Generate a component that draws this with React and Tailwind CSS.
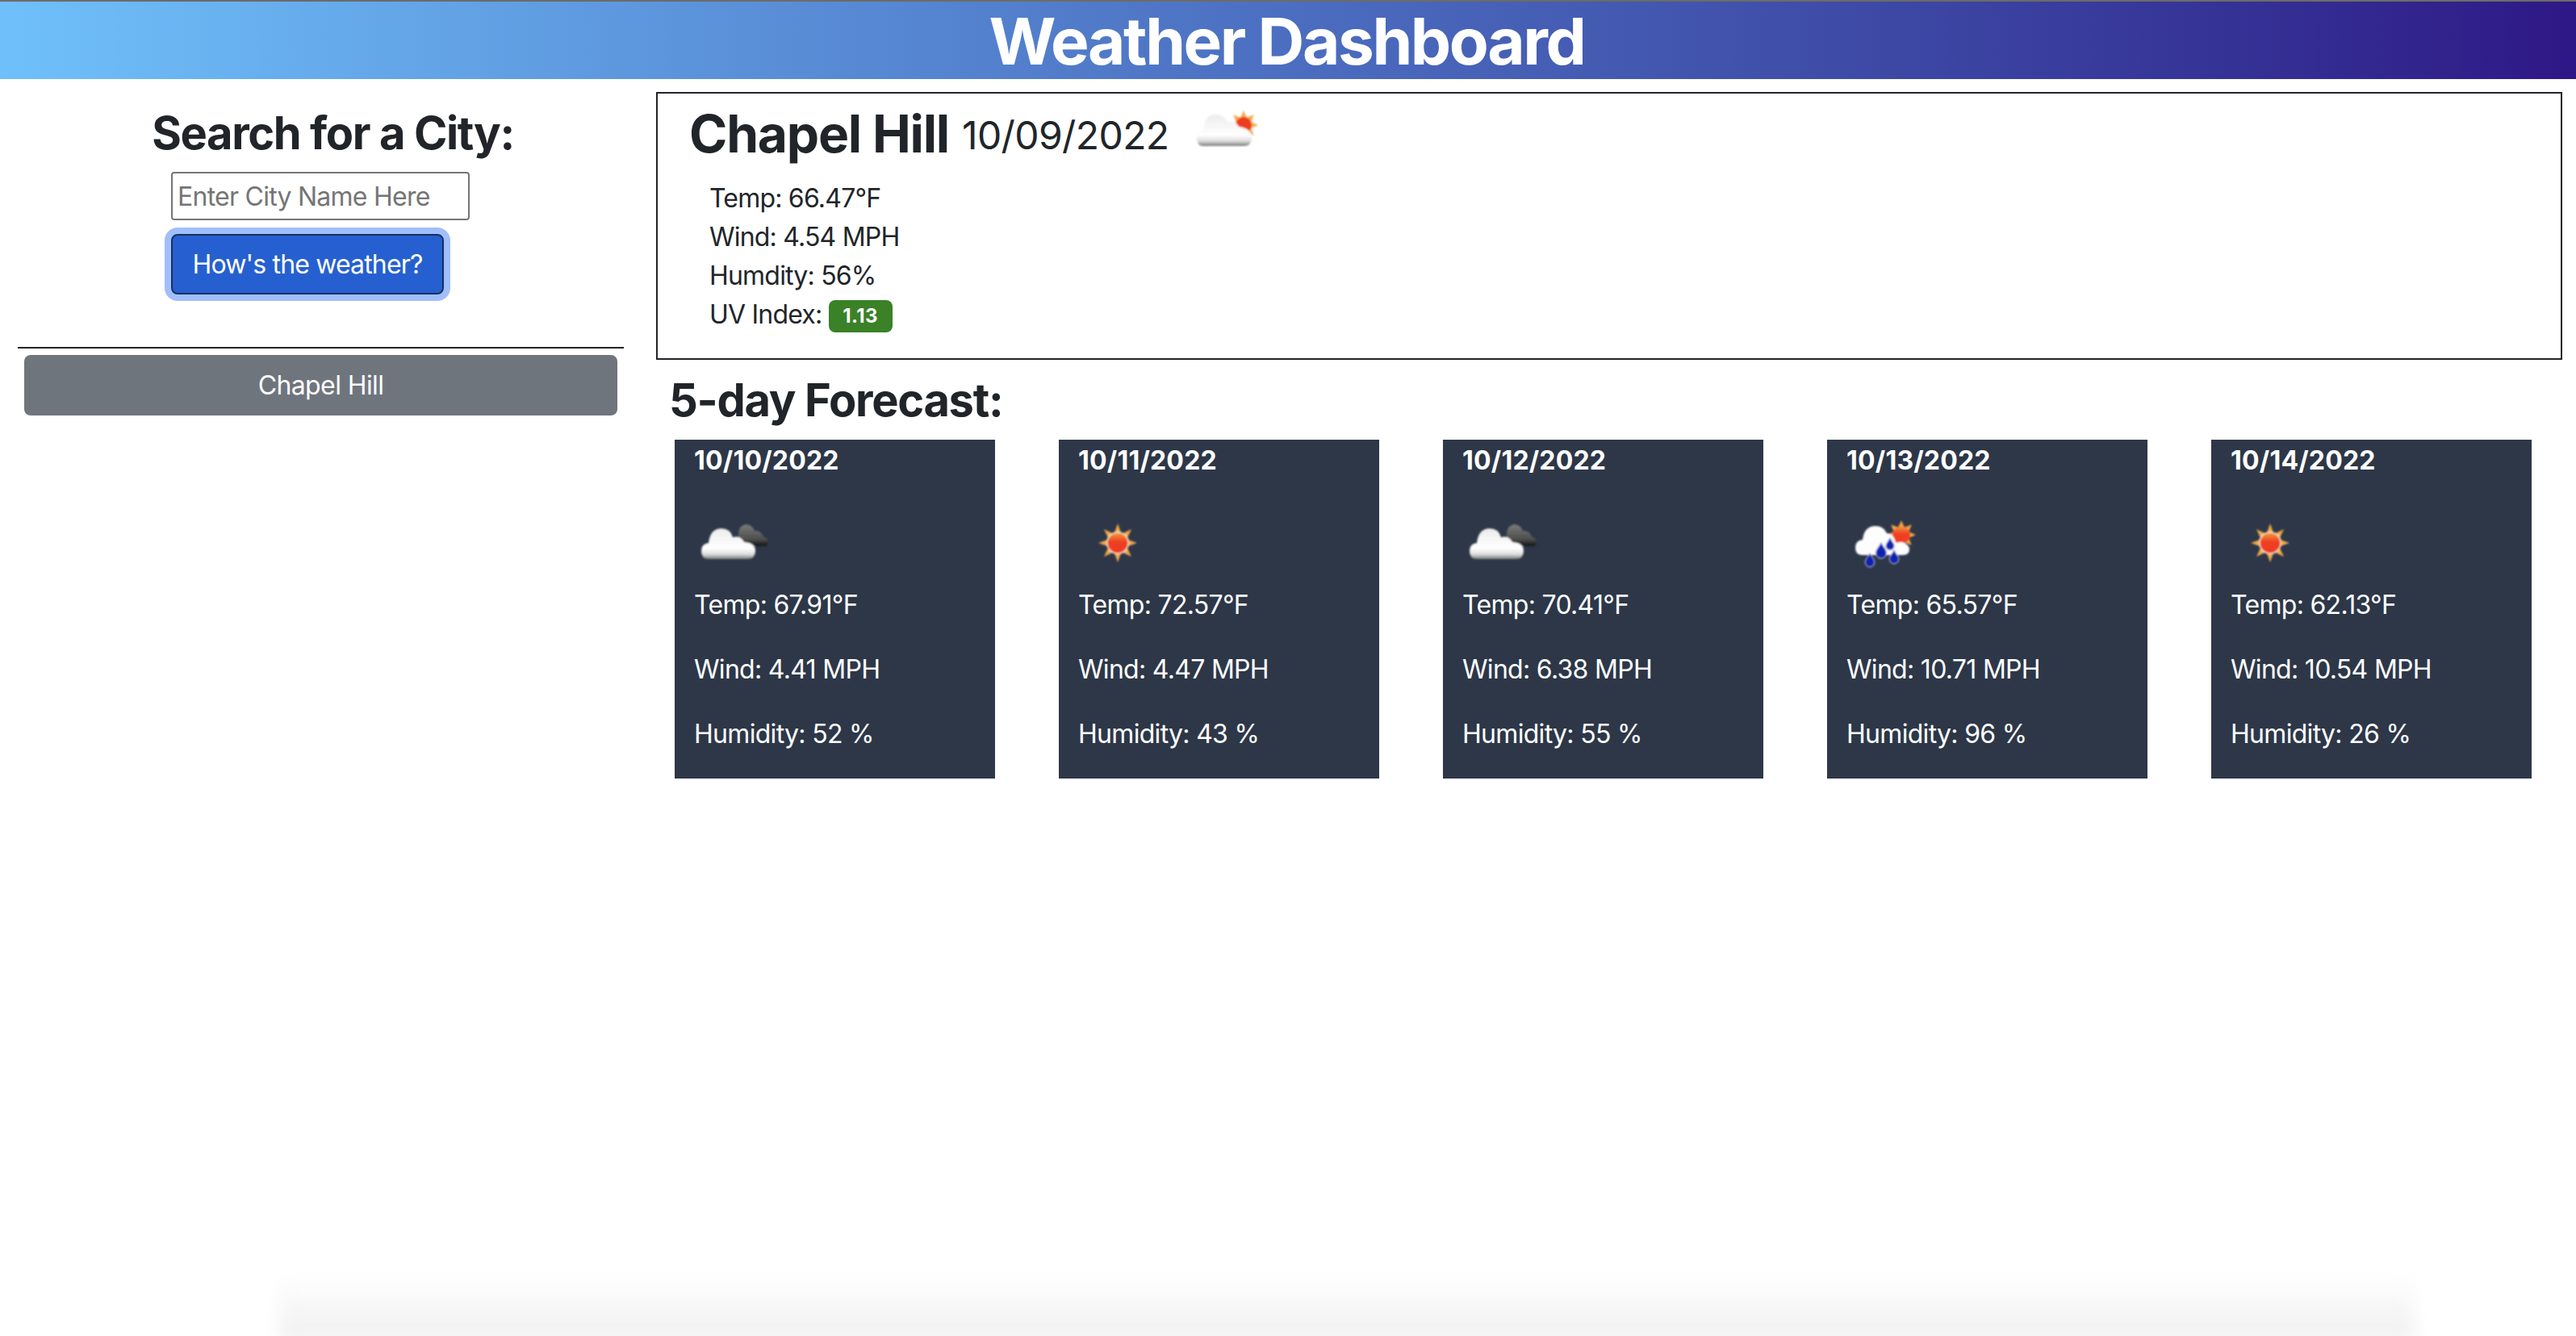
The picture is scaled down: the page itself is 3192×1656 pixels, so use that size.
const forecast = [
  { date: "10/10/2022", icon: "clouds", temp: "67.91", wind: "4.41", humidity: "52" },
  { date: "10/11/2022", icon: "sun", temp: "72.57", wind: "4.47", humidity: "43" },
  { date: "10/12/2022", icon: "clouds", temp: "70.41", wind: "6.38", humidity: "55" },
  { date: "10/13/2022", icon: "rain", temp: "65.57", wind: "10.71", humidity: "96" },
  { date: "10/14/2022", icon: "sun", temp: "62.13", wind: "10.54", humidity: "26" },
];

const cloudPath =
  "M18 70 Q9 70 9 60 Q9 51 18 50 Q20 32 34 32 Q45 32 48 43 Q57 40 62 49 Q76 50 76 60 Q76 70 66 70 Z";
const partlyPath =
  "M16 68 Q8 68 8 58 Q8 49 16 48 Q18 29 30 29 Q42 29 46 38 Q56 36 60 44 Q76 46 76 58 Q76 68 66 68 Z";
const rainPath =
  "M20 65 Q11 65 11 56 Q11 47 20 46 Q22 29 36 29 Q46 29 50 38 Q58 37 61 50 Q68 48 72 50 Q78 53 78 58 Q78 65 70 65 Z";

// 8 pointed star behind the sun disc
const starPoints = (cx, cy, outer, inner, count = 8) => {
  const points = [];
  for (let i = 0; i < count * 2; i++) {
    const r = i % 2 === 0 ? outer : inner;
    const a = (Math.PI * i) / count - Math.PI / 2;
    points.push(`${cx + r * Math.cos(a)},${cy + r * Math.sin(a)}`);
  }
  return points.join(" ");
};

const IconDefs = () => (
  <svg className="absolute w-0 h-0">
    <defs>
      <linearGradient id="cloudFill" x1="0" y1="0" x2="0" y2="1">
        <stop offset="0" stopColor="#ececec" />
        <stop offset="0.65" stopColor="#ffffff" />
        <stop offset="0.84" stopColor="#dddddd" />
        <stop offset="1" stopColor="#7b7b7b" />
      </linearGradient>
      <linearGradient id="darkFill" x1="0" y1="0" x2="0" y2="1">
        <stop offset="0" stopColor="#7a7a7a" />
        <stop offset="0.7" stopColor="#4c4c4c" />
        <stop offset="1" stopColor="#111111" />
      </linearGradient>
      <linearGradient id="sunFill" x1="0" y1="0" x2="0" y2="1">
        <stop offset="0" stopColor="#f39a3c" />
        <stop offset="0.45" stopColor="#ee3f22" />
        <stop offset="1" stopColor="#ee3a20" />
      </linearGradient>
      <filter id="soft" x="-20%" y="-20%" width="140%" height="140%">
        <feGaussianBlur stdDeviation="0.8" />
      </filter>
    </defs>
  </svg>
);

const Drop = ({ x, y, s = 1 }) => (
  <path
    d={`M${x} ${y - 9 * s} C${x + 2 * s} ${y - 4 * s} ${x + 6 * s} ${y - 1 * s} ${x + 6 * s} ${y + 3 * s} A${6 * s} ${6 * s} 0 0 1 ${x - 6 * s} ${y + 3 * s} C${x - 6 * s} ${y - 1 * s} ${x - 2 * s} ${y - 4 * s} ${x} ${y - 9 * s} Z`}
    fill="#0b22b2"
    stroke="#ffffff"
    strokeOpacity="0.55"
    strokeWidth="1"
  />
);

const WeatherIcon = ({ type }) => (
  <svg viewBox="0 0 100 100" className="block w-[100px] h-[100px]">
    <g filter="url(#soft)">
      {type === "sun" && (
        <>
          <polygon points={starPoints(49, 50, 24, 12)} fill="#f5a94a" />
          <circle cx="49" cy="50" r="14" fill="#fbe3c4" />
          <circle cx="49" cy="50" r="12.5" fill="url(#sunFill)" />
        </>
      )}
      {type === "clouds" && (
        <>
          <path
            d="M56 54 Q51 48 55 42 Q54 29 64 27 Q72 27 75 35 Q83 34 86 42 Q92 44 92 49 Q92 54 86 54 Z"
            fill="url(#darkFill)"
          />
          <path d={cloudPath} fill="url(#cloudFill)" />
        </>
      )}
      {type === "partly" && (
        <>
          <polygon points={starPoints(66, 42, 18, 10)} fill="#f5a94a" />
          <circle cx="66" cy="42" r="10" fill="#ee3a20" />
          <path d={partlyPath} fill="url(#cloudFill)" />
        </>
      )}
      {type === "rain" && (
        <>
          <polygon points={starPoints(68, 40, 18, 10)} fill="#f5a94a" />
          <circle cx="68" cy="40" r="11" fill="url(#sunFill)" />
          <path d={rainPath} fill="#fdfdfd" />
          <Drop x={29} y={71} />
          <Drop x={43} y={59} s={1.15} />
          <Drop x={59} y={67} />
          <Drop x={54} y={51} s={0.9} />
        </>
      )}
    </g>
  </svg>
);

const App = () => {
  return (
    <div className="relative min-h-[1656px] overflow-hidden bg-white font-['Inter',sans-serif] text-[32px] leading-[48px] text-[#212529]">
      <IconDefs />
      <header className="h-[98px] border-t-2 border-[#6b6b6b] bg-linear-to-r from-[#6fc0fa] to-[#2e1786] pt-[2px] pr-[3px] text-center text-[80px] leading-[94px] font-bold text-white tracking-[-2.4px]">
        Weather Dashboard
      </header>

      <div className="flex">
        <aside className="w-[796px] shrink-0 pl-[22px] pr-[23px]">
          <h3 className="mt-[34px] mb-[14px] text-center pl-[30px] text-[56px] leading-[67px] font-bold tracking-[-1.4px]">
            Search for a City:
          </h3>
          <div className="pl-[190px]">
            <input
              type="text"
              placeholder="Enter City Name Here"
              className="block w-[370px] h-[60px] px-[6px] border-2 border-[#767676] rounded-[4px] placeholder:text-[#757575] text-[32px] tracking-[-0.75px]"
            />
            <button className="block mt-[17px] w-[338px] h-[75px] bg-[#2660d0] border-2 border-[#1a2f5f] rounded-[8px] ring-8 ring-[#a0bffa] text-white text-[32px] tracking-[-0.85px]">
              How's the weather?
            </button>
          </div>
          <hr className="mt-[65px] border-t-2 border-[#212529]" />
          <button className="block mt-[8px] mx-[8px] w-[735px] h-[75px] bg-[#6f757d] rounded-[8px] text-white text-[32px] tracking-[-0.6px]">
            Chapel Hill
          </button>
        </aside>

        <main className="flex-1 pt-[16px] pl-[17px] pr-[17px]">
          <section className="h-[332px] border-2 border-[#212529] pt-[11px] pl-[39px]">
            <h2 className="flex items-center h-[77px] text-[64px] leading-[77px] font-bold tracking-[-1.2px]">
              Chapel Hill
              <span className="ml-[16px] mt-[3px] text-[48px] font-normal tracking-[-0.6px]">10/09/2022</span>
              <span className="ml-[26px] -mt-[6px]">
                <WeatherIcon type="partly" />
              </span>
            </h2>
            <div className="mt-[18px] pl-[25px] tracking-[-0.8px]">
              <p>Temp: 66.47°F</p>
              <p>Wind: 4.54 MPH</p>
              <p>Humdity: 56%</p>
              <p>
                UV Index:{" "}
                <span className="inline-block w-[79px] h-[40px] rounded-[8px] bg-[#3a8127] text-center text-[24px] leading-[40px] font-bold tracking-[0.4px] text-white align-[1px]">
                  1.13
                </span>
              </p>
            </div>
          </section>

          <h3 className="mt-[17px] mb-[15px] ml-[16px] text-[56px] leading-[67px] font-bold tracking-[-1.3px]">
            5-day Forecast:
          </h3>
          <div className="flex gap-[79px] ml-[23px]">
            {forecast.map((day) => (
              <div key={day.date} className="w-[397px] h-[420px] bg-[#2d3748] px-[24px] text-white tracking-[-0.7px]">
                <h5 className="pt-[2px] h-[48px] font-bold tracking-[0.2px]">{day.date}</h5>
                <div className="mt-[30px] mb-[3px]">
                  <WeatherIcon type={day.icon} />
                </div>
                <p className="mb-[32px]">Temp: {day.temp}°F</p>
                <p className="mb-[32px]">Wind: {day.wind} MPH</p>
                <p>Humidity: {day.humidity} %</p>
              </div>
            ))}
          </div>
        </main>
      </div>

      {/* window shadow along the bottom of the screenshot */}
      <div className="absolute left-[346px] right-[200px] -bottom-[6px] h-[84px] bg-linear-to-t from-[#efefef] to-white/0 blur-[10px]" />
    </div>
  );
};

export default App;
